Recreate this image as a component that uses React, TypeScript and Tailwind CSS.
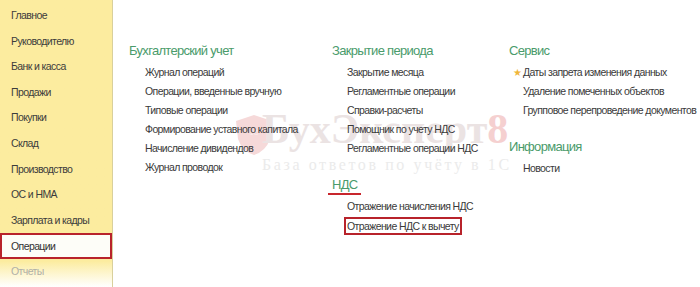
import React from "react";

const side = [
  "Главное",
  "Руководителю",
  "Банк и касса",
  "Продажи",
  "Покупки",
  "Склад",
  "Производство",
  "ОС и НМА",
  "Зарплата и кадры",
];

function Heading({ children }: { children: React.ReactNode }) {
  return (
    <div className="h-[16px] leading-[16px] text-[13px] tracking-[-0.7px] text-[#4a9b6b] whitespace-nowrap">
      {children}
    </div>
  );
}

function Item({ children, pl = "pl-[16px]" }: { children: React.ReactNode; pl?: string }) {
  return <div className={`h-[19px] leading-[19px] whitespace-nowrap ${pl}`}>{children}</div>;
}

export default function App() {
  return (
    <div className="relative w-[700px] h-[287px] bg-white overflow-hidden flex text-[10.5px] tracking-[-0.6px] text-[#3a3a3a] font-['Liberation_Sans',Arial,sans-serif]">
      {/* Sidebar */}
      <div className="w-[113px] shrink-0 h-[287px] flex flex-col pt-[3px] bg-gradient-to-b from-[#fcec9f] from-[91%] to-white border-r border-[#d9d09c]">
        {side.map((s) => (
          <div key={s} className="h-[25.6px] leading-[25.6px] pl-[11px] text-[#3c3c3c] whitespace-nowrap">
            {s}
          </div>
        ))}
        <div className="h-[26px] leading-[22px] pl-[9px] bg-[#fdfdf8] border-2 border-[#b8232b] text-[#333]">
          Операции
        </div>
        <div className="h-[25px] leading-[25px] pl-[11px] text-[#b0b0a8]">Отчеты</div>
      </div>

      {/* Watermark */}
      <div className="absolute left-[232px] top-[104px] pointer-events-none select-none tracking-normal">
        <div className="flex items-start">
          <svg width="44" height="44" viewBox="0 0 44 44" className="mt-[9px] shrink-0">
            <path d="M22 2 L40 8 L38 26 Q34 38 22 42 Q10 38 6 26 L4 8 Z" fill="#f6d9d9" />
            <text x="22" y="22" textAnchor="middle" fontSize="7" fill="#fbeeee" fontFamily="Liberation Sans">
              1С
            </text>
          </svg>
          <div className="ml-[-14px] text-[42px] leading-[50px] font-bold text-[#ebe3e3] whitespace-nowrap font-['Liberation_Serif',serif]">
            БухЭксперт<span className="text-[#f5d0d0]">8</span>
          </div>
        </div>
        <div className="ml-[30px] mt-[-1px] text-[16px] leading-[18px] text-[#ebebeb] tracking-[2.6px] whitespace-nowrap font-['Liberation_Serif',serif]">
          База ответов по учёту в 1С
        </div>
      </div>

      {/* Content */}
      <div className="relative flex pl-[16px] pt-[43px]">
        <div className="w-[203px] shrink-0">
          <Heading>Бухгалтерский учет</Heading>
          <div className="mt-[4px]">
            <Item>Журнал операций</Item>
            <Item>Операции, введенные вручную</Item>
            <Item>Типовые операции</Item>
            <Item>Формирование уставного капитала</Item>
            <Item>Начисление дивидендов</Item>
            <Item>Журнал проводок</Item>
          </div>
        </div>
        <div className="w-[177px] shrink-0">
          <Heading>Закрытие периода</Heading>
          <div className="mt-[4px]">
            <Item pl="pl-[15px]">Закрытие месяца</Item>
            <Item pl="pl-[15px]">Регламентные операции</Item>
            <Item pl="pl-[15px]">Справки-расчеты</Item>
            <Item pl="pl-[15px]">Помощник по учету НДС</Item>
            <Item pl="pl-[15px]">Регламентные операции НДС</Item>
          </div>
          <div className="mt-[19px] w-fit">
            <Heading>НДС</Heading>
            <div className="h-[2px] ml-[-4px] mr-[-4px] bg-[#c8262d]" />
          </div>
          <div className="mt-[2px]">
            <Item pl="pl-[15px]">Отражение начисления НДС</Item>
            <div className="h-[19px] pl-[12px] flex items-center">
              <span className="border-2 border-[#b8232b] px-[1px] leading-[14px] whitespace-nowrap">
                Отражение НДС к вычету
              </span>
            </div>
          </div>
        </div>
        <div className="w-[200px] shrink-0">
          <Heading>Сервис</Heading>
          <div className="mt-[4px]">
            <div className="h-[19px] leading-[19px] pl-[4px] whitespace-nowrap flex items-center">
              <span className="w-[10px] text-[10px] text-[#f0b63a]">★</span>
              Даты запрета изменения данных
            </div>
            <Item pl="pl-[14px]">Удаление помеченных объектов</Item>
            <Item pl="pl-[14px]">Групповое перепроведение документов</Item>
          </div>
          <div className="mt-[19px]">
            <Heading>Информация</Heading>
            <div className="mt-[4px]">
              <Item pl="pl-[14px]">Новости</Item>
            </div>
          </div>
        </div>
      </div>
    </div>
  );
}
